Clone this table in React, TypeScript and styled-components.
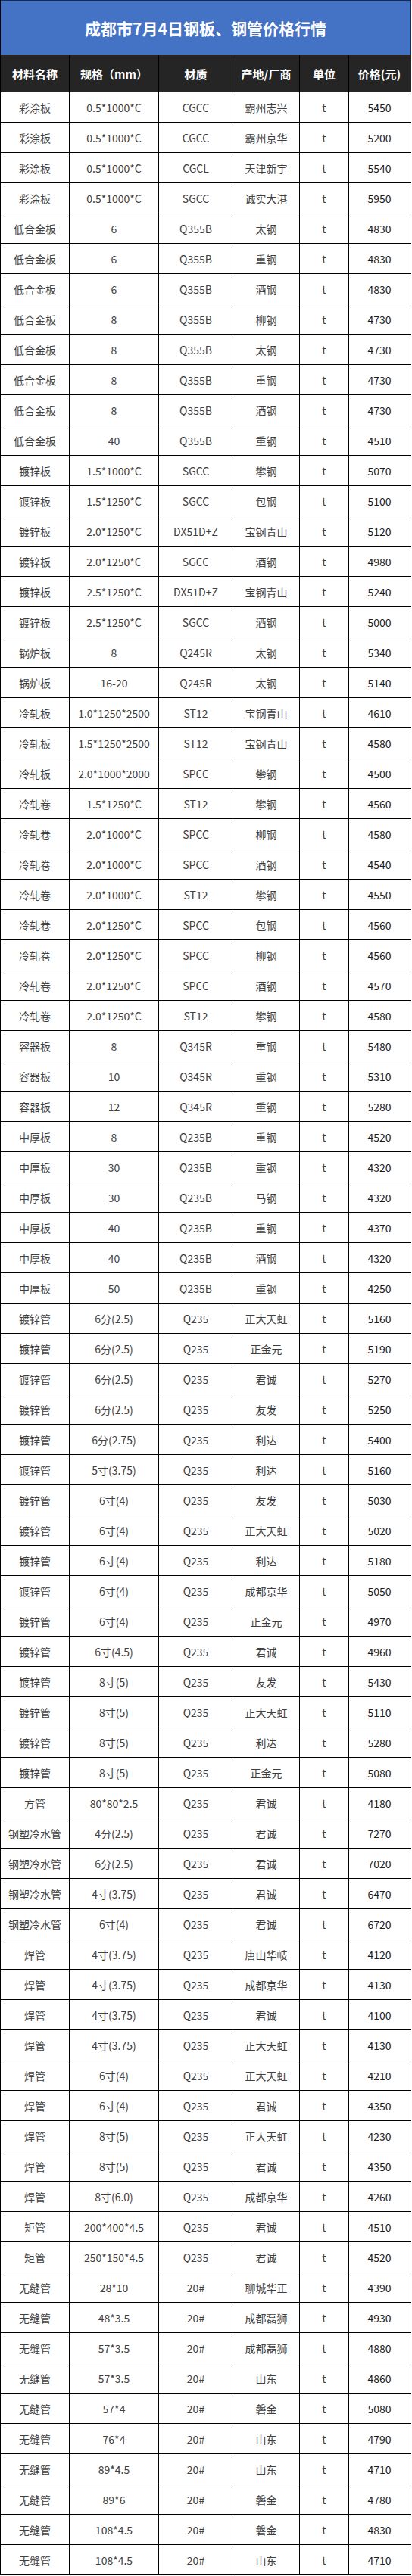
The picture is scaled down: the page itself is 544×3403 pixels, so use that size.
import React from 'react';
import styled, { createGlobalStyle } from 'styled-components';

const GlobalStyle = createGlobalStyle`
  html, body {
    margin: 0;
    padding: 0;
    background: #fff;
  }
  body {
    font-family: "Noto Sans CJK SC", "Noto Sans", sans-serif;
  }
`;

const COLS = '91px 118px 98px 88px 65px 81px';

const Sheet = styled.div`
  width: 542px;
  border-left: 1px solid #000;
  box-sizing: content-box;
`;

const TitleBar = styled.div`
  height: 73px;
  box-sizing: border-box;
  background: #4472c4;
  border-top: 1px solid #1e2a44;
  border-right: 1px solid #1e2a44;
  border-bottom: 1px solid #000;
  display: flex;
  align-items: center;
  justify-content: center;
  color: #fff;
  font-size: 21px;
  font-weight: 700;
  letter-spacing: 0;
`;

const Row = styled.div<{ $head?: boolean }>`
  display: grid;
  grid-template-columns: ${COLS};
  height: ${(p) => (p.$head ? '49px' : '40px')};
  box-sizing: border-box;
  border-bottom: 1px solid #000;
  background: ${(p) => (p.$head ? '#252525' : '#fff')};
`;

const Cell = styled.div<{ $head?: boolean; $price?: boolean }>`
  display: flex;
  align-items: center;
  justify-content: center;
  box-sizing: border-box;
  border-right: 1px solid #000;
  white-space: nowrap;
  font-size: ${(p) => (p.$head ? '15px' : '14px')};
  font-weight: ${(p) => (p.$head ? 700 : 400)};
  color: ${(p) => (p.$head ? '#fff' : p.$price ? '#1c1c1c' : '#404040')};
`;

const headers = ['材料名称', '规格（mm）', '材质', '产地/厂商', '单位', '价格(元)'];

// name, spec, grade, mill, price
const rows: [string, string, string, string, string][] = [
  ['彩涂板', '0.5*1000*C', 'CGCC', '霸州志兴', '5450'],
  ['彩涂板', '0.5*1000*C', 'CGCC', '霸州京华', '5200'],
  ['彩涂板', '0.5*1000*C', 'CGCL', '天津新宇', '5540'],
  ['彩涂板', '0.5*1000*C', 'SGCC', '诚实大港', '5950'],
  ['低合金板', '6', 'Q355B', '太钢', '4830'],
  ['低合金板', '6', 'Q355B', '重钢', '4830'],
  ['低合金板', '6', 'Q355B', '酒钢', '4830'],
  ['低合金板', '8', 'Q355B', '柳钢', '4730'],
  ['低合金板', '8', 'Q355B', '太钢', '4730'],
  ['低合金板', '8', 'Q355B', '重钢', '4730'],
  ['低合金板', '8', 'Q355B', '酒钢', '4730'],
  ['低合金板', '40', 'Q355B', '重钢', '4510'],
  ['镀锌板', '1.5*1000*C', 'SGCC', '攀钢', '5070'],
  ['镀锌板', '1.5*1250*C', 'SGCC', '包钢', '5100'],
  ['镀锌板', '2.0*1250*C', 'DX51D+Z', '宝钢青山', '5120'],
  ['镀锌板', '2.0*1250*C', 'SGCC', '酒钢', '4980'],
  ['镀锌板', '2.5*1250*C', 'DX51D+Z', '宝钢青山', '5240'],
  ['镀锌板', '2.5*1250*C', 'SGCC', '酒钢', '5000'],
  ['锅炉板', '8', 'Q245R', '太钢', '5340'],
  ['锅炉板', '16-20', 'Q245R', '太钢', '5140'],
  ['冷轧板', '1.0*1250*2500', 'ST12', '宝钢青山', '4610'],
  ['冷轧板', '1.5*1250*2500', 'ST12', '宝钢青山', '4580'],
  ['冷轧板', '2.0*1000*2000', 'SPCC', '攀钢', '4500'],
  ['冷轧卷', '1.5*1250*C', 'ST12', '攀钢', '4560'],
  ['冷轧卷', '2.0*1000*C', 'SPCC', '柳钢', '4580'],
  ['冷轧卷', '2.0*1000*C', 'SPCC', '酒钢', '4540'],
  ['冷轧卷', '2.0*1000*C', 'ST12', '攀钢', '4550'],
  ['冷轧卷', '2.0*1250*C', 'SPCC', '包钢', '4560'],
  ['冷轧卷', '2.0*1250*C', 'SPCC', '柳钢', '4560'],
  ['冷轧卷', '2.0*1250*C', 'SPCC', '酒钢', '4570'],
  ['冷轧卷', '2.0*1250*C', 'ST12', '攀钢', '4580'],
  ['容器板', '8', 'Q345R', '重钢', '5480'],
  ['容器板', '10', 'Q345R', '重钢', '5310'],
  ['容器板', '12', 'Q345R', '重钢', '5280'],
  ['中厚板', '8', 'Q235B', '重钢', '4520'],
  ['中厚板', '30', 'Q235B', '重钢', '4320'],
  ['中厚板', '30', 'Q235B', '马钢', '4320'],
  ['中厚板', '40', 'Q235B', '重钢', '4370'],
  ['中厚板', '40', 'Q235B', '酒钢', '4320'],
  ['中厚板', '50', 'Q235B', '重钢', '4250'],
  ['镀锌管', '6分(2.5)', 'Q235', '正大天虹', '5160'],
  ['镀锌管', '6分(2.5)', 'Q235', '正金元', '5190'],
  ['镀锌管', '6分(2.5)', 'Q235', '君诚', '5270'],
  ['镀锌管', '6分(2.5)', 'Q235', '友发', '5250'],
  ['镀锌管', '6分(2.75)', 'Q235', '利达', '5400'],
  ['镀锌管', '5寸(3.75)', 'Q235', '利达', '5160'],
  ['镀锌管', '6寸(4)', 'Q235', '友发', '5030'],
  ['镀锌管', '6寸(4)', 'Q235', '正大天虹', '5020'],
  ['镀锌管', '6寸(4)', 'Q235', '利达', '5180'],
  ['镀锌管', '6寸(4)', 'Q235', '成都京华', '5050'],
  ['镀锌管', '6寸(4)', 'Q235', '正金元', '4970'],
  ['镀锌管', '6寸(4.5)', 'Q235', '君诚', '4960'],
  ['镀锌管', '8寸(5)', 'Q235', '友发', '5430'],
  ['镀锌管', '8寸(5)', 'Q235', '正大天虹', '5110'],
  ['镀锌管', '8寸(5)', 'Q235', '利达', '5280'],
  ['镀锌管', '8寸(5)', 'Q235', '正金元', '5080'],
  ['方管', '80*80*2.5', 'Q235', '君诚', '4180'],
  ['钢塑冷水管', '4分(2.5)', 'Q235', '君诚', '7270'],
  ['钢塑冷水管', '6分(2.5)', 'Q235', '君诚', '7020'],
  ['钢塑冷水管', '4寸(3.75)', 'Q235', '君诚', '6470'],
  ['钢塑冷水管', '6寸(4)', 'Q235', '君诚', '6720'],
  ['焊管', '4寸(3.75)', 'Q235', '唐山华岐', '4120'],
  ['焊管', '4寸(3.75)', 'Q235', '成都京华', '4130'],
  ['焊管', '4寸(3.75)', 'Q235', '君诚', '4100'],
  ['焊管', '4寸(3.75)', 'Q235', '正大天虹', '4130'],
  ['焊管', '6寸(4)', 'Q235', '正大天虹', '4210'],
  ['焊管', '6寸(4)', 'Q235', '君诚', '4350'],
  ['焊管', '8寸(5)', 'Q235', '正大天虹', '4230'],
  ['焊管', '8寸(5)', 'Q235', '君诚', '4350'],
  ['焊管', '8寸(6.0)', 'Q235', '成都京华', '4260'],
  ['矩管', '200*400*4.5', 'Q235', '君诚', '4510'],
  ['矩管', '250*150*4.5', 'Q235', '君诚', '4520'],
  ['无缝管', '28*10', '20#', '聊城华正', '4390'],
  ['无缝管', '48*3.5', '20#', '成都磊狮', '4930'],
  ['无缝管', '57*3.5', '20#', '成都磊狮', '4880'],
  ['无缝管', '57*3.5', '20#', '山东', '4860'],
  ['无缝管', '57*4', '20#', '磐金', '5080'],
  ['无缝管', '76*4', '20#', '山东', '4790'],
  ['无缝管', '89*4.5', '20#', '山东', '4710'],
  ['无缝管', '89*6', '20#', '磐金', '4780'],
  ['无缝管', '108*4.5', '20#', '磐金', '4830'],
  ['无缝管', '108*4.5', '20#', '山东', '4710'],
];

const App = () => {
  return (
    <>
      <GlobalStyle />
      <Sheet>
        <TitleBar>成都市7月4日钢板、钢管价格行情</TitleBar>
        <Row $head>
          {headers.map((h) => (
            <Cell key={h} $head>
              {h}
            </Cell>
          ))}
        </Row>
        {rows.map(([name, spec, grade, mill, price], i) => (
          <Row key={i}>
            <Cell>{name}</Cell>
            <Cell>{spec}</Cell>
            <Cell>{grade}</Cell>
            <Cell>{mill}</Cell>
            <Cell>t</Cell>
            <Cell $price>{price}</Cell>
          </Row>
        ))}
      </Sheet>
    </>
  );
};

export default App;
